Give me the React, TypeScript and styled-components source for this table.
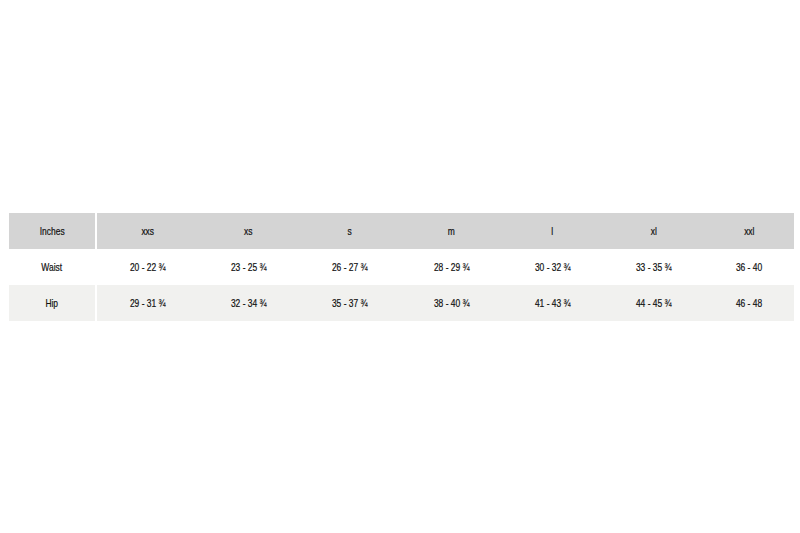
import React from "react";
import styled, { createGlobalStyle } from "styled-components";

const Global = createGlobalStyle`
  html, body { margin: 0; padding: 0; background: #ffffff; }
  body { font-family: "Liberation Sans", Arial, sans-serif; }
`;

const Page = styled.div`
  width: 800px;
  height: 533px;
  padding: 213px 6px 0 9px;
  box-sizing: border-box;
`;

const Table = styled.table`
  width: 785px;
  border-collapse: collapse;
  table-layout: fixed;
`;

const Row = styled.tr<{ $bg: string }>`
  background: ${(p) => p.$bg};
  height: 36px;
`;

const Cell = styled.td<{ $first?: boolean }>`
  padding: 0 0 2px 0;
  text-align: center;
  vertical-align: middle;
  line-height: 1;
  border-right: ${(p) => (p.$first ? "2px solid #ffffff" : "none")};
`;

/* Arial Narrow look: condensed sans */
const Label = styled.span`
  display: inline-block;
  font-size: 10.3px;
  color: #111111;
  white-space: nowrap;
  transform: scaleX(0.82);
  -webkit-text-stroke: 0.2px #111111;
`;

const widths = [87, 102, 101, 102, 101, 101, 101, 90];

const rows: { bg: string; cells: string[] }[] = [
  { bg: "#d4d4d4", cells: ["Inches", "xxs", "xs", "s", "m", "l", "xl", "xxl"] },
  { bg: "#ffffff", cells: ["Waist", "20 - 22 ¾", "23 - 25 ¾", "26 - 27 ¾", "28 - 29 ¾", "30 - 32 ¾", "33 - 35 ¾", "36 - 40"] },
  { bg: "#f1f1ef", cells: ["Hip", "29 - 31 ¾", "32 - 34 ¾", "35 - 37 ¾", "38 - 40 ¾", "41 - 43 ¾", "44 - 45 ¾", "46 - 48"] },
];

export default function App() {
  return (
    <>
      <Global />
      <Page>
        <Table>
          <colgroup>
            {widths.map((w, i) => (
              <col key={i} style={{ width: w }} />
            ))}
          </colgroup>
          <tbody>
            {rows.map((r, ri) => (
              <Row key={ri} $bg={r.bg}>
                {r.cells.map((c, ci) => (
                  <Cell key={ci} $first={ci === 0}>
                    <Label>{c}</Label>
                  </Cell>
                ))}
              </Row>
            ))}
          </tbody>
        </Table>
      </Page>
    </>
  );
}
